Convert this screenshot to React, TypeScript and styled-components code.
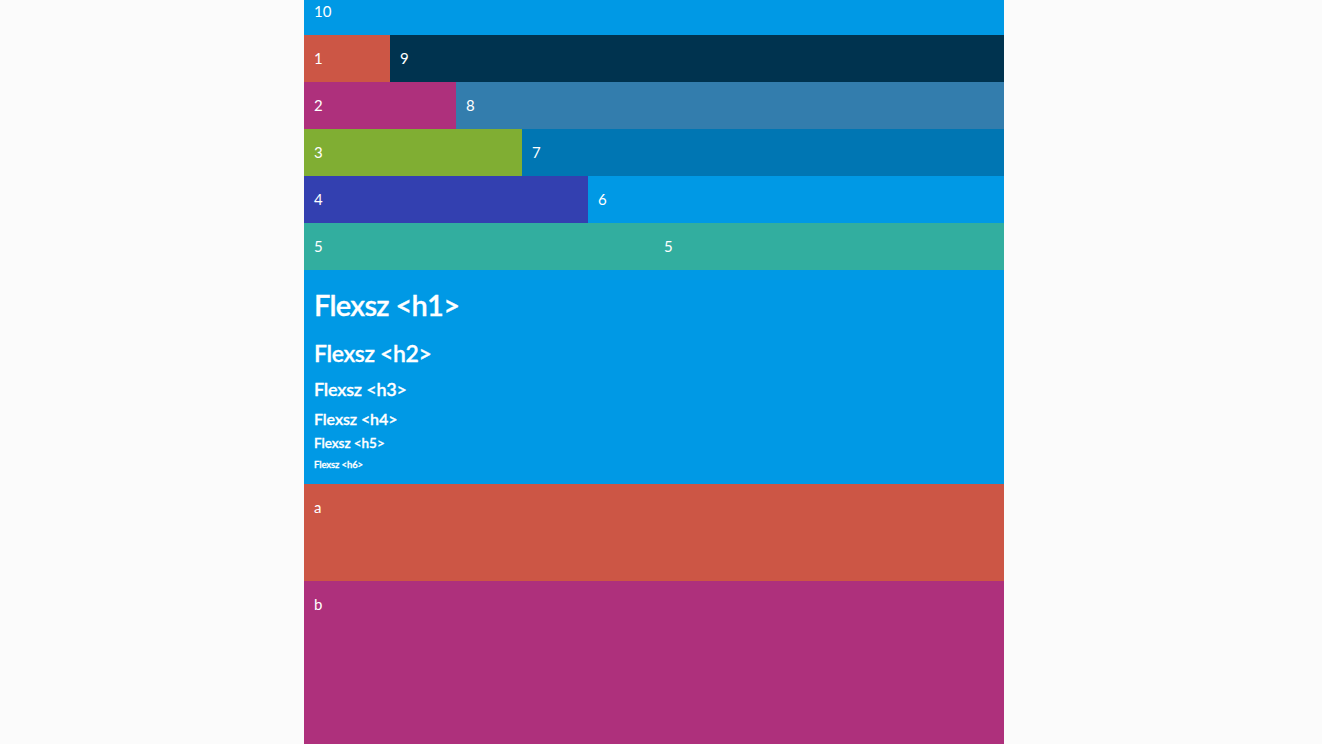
import React from "react";
import styled, { createGlobalStyle } from "styled-components";

const Global = createGlobalStyle`
  html, body { margin: 0; padding: 0; background: #fbfbfb; }
  body { font-family: Lato, "Open Sans", sans-serif; color: #fff; overflow: hidden; }
`;

const Frame = styled.div`
  padding-right: 14px;
`;

const Page = styled.div`
  width: 700px;
  margin: -12px auto 0;
  display: flex;
  flex-direction: column;
`;

const Row = styled.div`
  display: flex;
`;

const Cell = styled.div<{ $bg: string; $grow: number; $h?: number }>`
  flex: ${(p) => p.$grow} 1 0;
  background: ${(p) => p.$bg};
  padding: 10px;
  min-height: ${(p) => (p.$h ? `${p.$h - 20}px` : "auto")};
  font-size: 15px;
  line-height: 27px;
`;

const HeadBlock = styled.div`
  background: #0099e5;
  padding: 16px 10px 13px;
  display: flex;
  flex-direction: column;
  align-items: flex-start;
`;

const Head = styled.div<{ $size: number; $lh: number; $mt: number; $ls: number }>`
  font-size: ${(p) => p.$size}px;
  line-height: ${(p) => p.$lh}px;
  margin-top: ${(p) => p.$mt}px;
  letter-spacing: ${(p) => p.$ls}px;
  font-weight: 600;
  -webkit-text-stroke: 0.3px #fff;
`;

const pairs: [string, string, string, string][] = [
  ["1", "#cc5645", "9", "#00334f"],
  ["2", "#ae307c", "8", "#337dad"],
  ["3", "#80ae33", "7", "#0076b3"],
  ["4", "#3340b0", "6", "#0099e5"],
  ["5", "#32ae9f", "5", "#32ae9f"],
];

const heads = [
  { t: "Flexsz <h1>", s: 29, lh: 38, mt: 0, ls: -0.7 },
  { t: "Flexsz <h2>", s: 23, lh: 30, mt: 14, ls: -0.35 },
  { t: "Flexsz <h3>", s: 18, lh: 24, mt: 9, ls: -0.2 },
  { t: "Flexsz <h4>", s: 16, lh: 22, mt: 7, ls: -0.1 },
  { t: "Flexsz <h5>", s: 13.5, lh: 18, mt: 4, ls: -0.05 },
  { t: "Flexsz <h6>", s: 9.5, lh: 13, mt: 6, ls: -0.1 },
];

export default function App() {
  return (
    <>
      <Global />
      <Frame>
        <Page>
          <Row>
            <Cell $bg="#0099e5" $grow={1}>10</Cell>
          </Row>
          {pairs.map(([a, ca, b, cb]) => (
            <Row key={a + b}>
              <Cell $bg={ca} $grow={Number(a)}>{a}</Cell>
              <Cell $bg={cb} $grow={Number(b)}>{b}</Cell>
            </Row>
          ))}
          <HeadBlock>
            {heads.map((h) => (
              <Head key={h.t} $size={h.s} $lh={h.lh} $mt={h.mt} $ls={h.ls}>{h.t}</Head>
            ))}
          </HeadBlock>
          <Row>
            <Cell $bg="#cc5645" $grow={1} $h={97}>a</Cell>
          </Row>
          <Row>
            <Cell $bg="#ae307c" $grow={1} $h={180}>b</Cell>
          </Row>
        </Page>
      </Frame>
    </>
  );
}
